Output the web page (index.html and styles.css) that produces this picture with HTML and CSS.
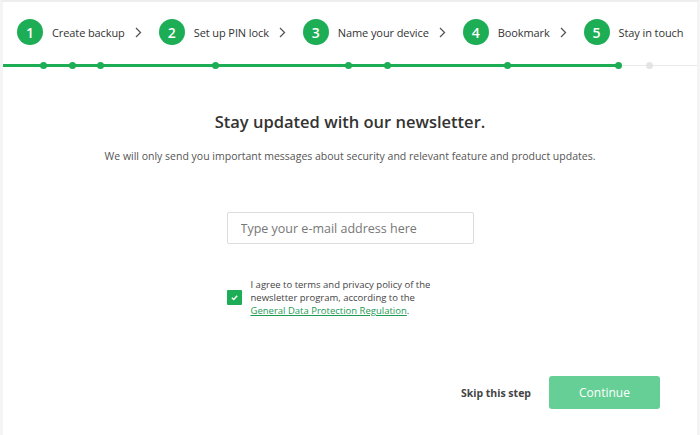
FILE: index.html
```html
<!DOCTYPE html>
<html lang="en">
<head>
    <meta charset="UTF-8">
    <title>Stay in touch</title>
    <link rel="stylesheet" href="styles.css">
</head>
<body>
    <div class="page">
        <div class="top-accent"></div>
        <nav class="steps">
            <div class="step"><span class="num">1</span><span class="label">Create backup</span><svg class="chev" width="7" height="11" viewBox="0 0 7 11"><path d="M1 1 L5.5 5.5 L1 10" fill="none" stroke="#555" stroke-width="1.3"/></svg></div>
            <div class="step"><span class="num">2</span><span class="label">Set up PIN lock</span><svg class="chev" width="7" height="11" viewBox="0 0 7 11"><path d="M1 1 L5.5 5.5 L1 10" fill="none" stroke="#555" stroke-width="1.3"/></svg></div>
            <div class="step"><span class="num">3</span><span class="label">Name your device</span><svg class="chev" width="7" height="11" viewBox="0 0 7 11"><path d="M1 1 L5.5 5.5 L1 10" fill="none" stroke="#555" stroke-width="1.3"/></svg></div>
            <div class="step"><span class="num">4</span><span class="label">Bookmark</span><svg class="chev" width="7" height="11" viewBox="0 0 7 11"><path d="M1 1 L5.5 5.5 L1 10" fill="none" stroke="#555" stroke-width="1.3"/></svg></div>
            <div class="step"><span class="num">5</span><span class="label">Stay in touch</span></div>
        </nav>
        <div class="progress">
            <div class="bar" style="width: 618px"></div>
            <span class="dot" style="left: 43px"></span>
            <span class="dot" style="left: 72px"></span>
            <span class="dot" style="left: 100px"></span>
            <span class="dot" style="left: 215px"></span>
            <span class="dot" style="left: 348px"></span>
            <span class="dot" style="left: 387px"></span>
            <span class="dot" style="left: 507px"></span>
            <span class="dot" style="left: 618px"></span>
            <span class="dot todo" style="left: 649px"></span>
        </div>

        <main class="content">
            <h2>Stay updated with our newsletter.</h2>
            <p class="lead">We will only send you important messages about security and relevant feature and product updates.</p>
            <input class="email" type="email" placeholder="Type your e-mail address here">
            <label class="agree">
                <span class="box">
                    <svg width="9" height="9" viewBox="0 0 10 10"><path d="M2 5.2 L4.2 7.2 L8 3" fill="none" stroke="#fff" stroke-width="1.6"/></svg>
                </span>
                <span class="agree-text">I agree to terms and privacy policy of the newsletter program, according to the <a href="#">General Data Protection Regulation</a>.</span>
            </label>
        </main>

        <footer class="actions">
            <a class="skip" href="#">Skip this step</a>
            <button class="continue">Continue</button>
        </footer>
    </div>
</body>
</html>
```

FILE: styles.css
```css
body {
    margin: 0;
    background: #fff;
    font-family: 'Open Sans', 'Noto Sans', Arial, sans-serif;
    color: #333;
}
.page {
    width: 700px;
    height: 435px;
    box-sizing: border-box;
    border-top: 2px solid #eee;
    border-left: 3px solid #f4f4f4;
    border-right: 3px solid #f4f4f4;
    position: relative;
    overflow: hidden;
}
.top-accent {
    position: absolute;
    top: -2px;
    left: 19px;
    width: 108px;
    height: 2px;
    background: #43a57c;
}
.steps {
    display: flex;
    align-items: center;
    padding: 17px 0 0 14px;
    height: 26px;
}
.step {
    display: flex;
    align-items: center;
    margin-right: 17px;
    white-space: nowrap;
}
.num {
    flex: none;
    width: 26px;
    height: 26px;
    border-radius: 50%;
    background: #1cad55;
    color: #fff;
    font-size: 14px;
    font-weight: 600;
    display: flex;
    align-items: center;
    justify-content: center;
    margin-right: 9px;
}
.label {
    font-size: 11px;
    color: #333;
    letter-spacing: -0.1px;
}
.chev {
    flex: none;
    margin-left: 10px;
}
.progress {
    position: relative;
    height: 9px;
    margin: 16px 0 0 -3px;
    background: linear-gradient(#e9e9e9, #e9e9e9) 0 4px / 100% 1px no-repeat;
}
.bar {
    position: absolute;
    left: 0;
    top: 3px;
    height: 3px;
    background: #1cad55;
}
.dot {
    position: absolute;
    top: 1px;
    width: 7px;
    height: 7px;
    margin-left: -3.5px;
    border-radius: 50%;
    background: #1cad55;
}
.dot.todo {
    background: #e4e4e4;
}
.content {
    display: flex;
    flex-direction: column;
    align-items: center;
    padding-top: 40px;
}
h2 {
    margin: 0;
    font-size: 16.5px;
    font-weight: 600;
    color: #333;
}
.lead {
    margin: 16px 0 0;
    font-size: 10.5px;
    color: #555;
}
.email {
    margin-top: 49px;
    width: 247px;
    height: 32px;
    box-sizing: border-box;
    border: 1px solid #dcdcdc;
    border-radius: 2px;
    padding: 0 13px;
    font-family: inherit;
    font-size: 12.5px;
}
.email::placeholder {
    color: #777;
}
.agree {
    display: flex;
    align-items: center;
    margin-top: 34px;
    width: 247px;
}
.box {
    flex: none;
    width: 15px;
    height: 15px;
    background: #1cad55;
    border-radius: 1px;
    display: flex;
    align-items: center;
    justify-content: center;
    margin-right: 9px;
}
.agree-text {
    width: 200px;
    font-size: 9.5px;
    line-height: 13px;
    color: #444;
}
.agree-text a {
    color: #1e9a55;
}
.actions {
    display: flex;
    align-items: center;
    justify-content: flex-end;
    padding-right: 37px;
    margin-top: 59px;
}
.skip {
    font-size: 10.5px;
    font-weight: 700;
    color: #444;
    text-decoration: none;
    margin-right: 18px;
}
.continue {
    width: 111px;
    height: 33px;
    border: none;
    border-radius: 3px;
    background: #66cf95;
    color: #fff;
    font-family: inherit;
    font-size: 12px;
}
```
